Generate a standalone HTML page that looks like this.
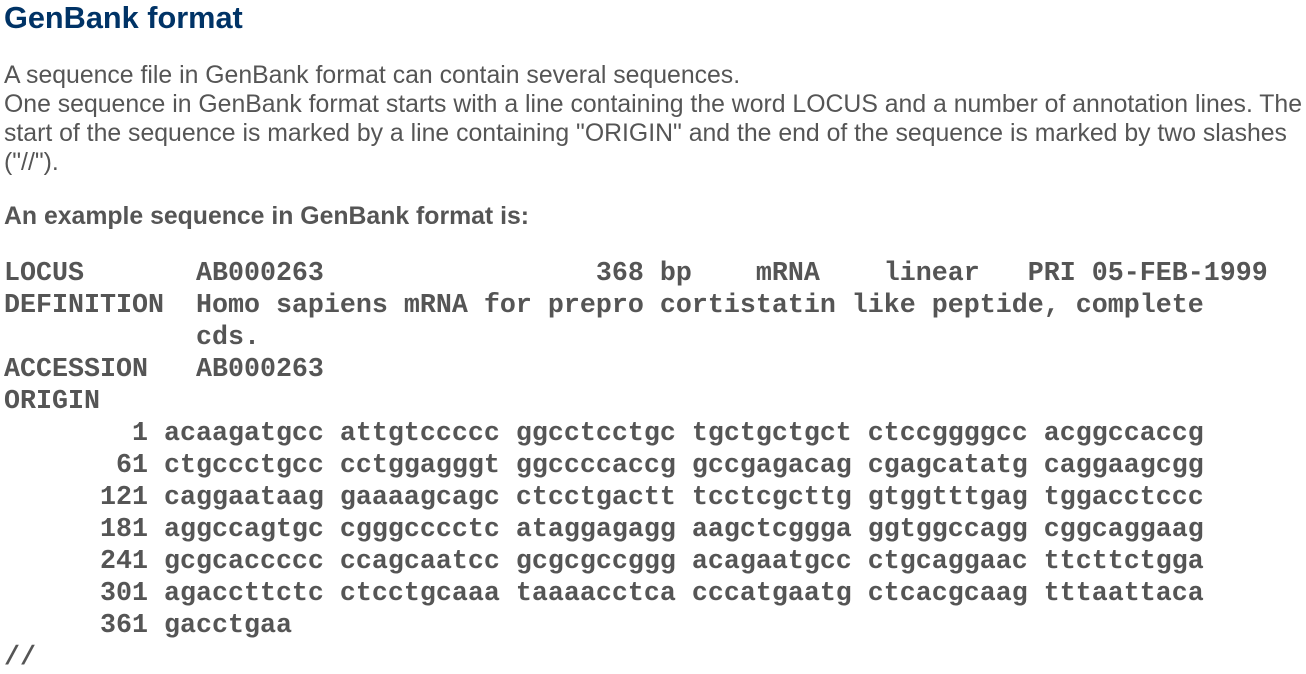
<!DOCTYPE html>
<html><head><style>
body{margin:0;background:#fff;width:1306px;height:673px;overflow:hidden}
h1{font:bold 30.7px "Liberation Sans",sans-serif;color:#003366;margin:0;position:absolute;left:4px;top:0px}
.p{position:absolute;left:4px;width:1302px;font:24.8px/29px "Liberation Sans",sans-serif;color:#555;margin:0;white-space:nowrap}
pre{position:absolute;left:4px;top:258px;margin:0;font:bold 26.67px/32px "Liberation Mono",monospace;color:#555}
</style></head><body>
<h1>GenBank format</h1>
<p class="p" style="top:61px">A sequence file in GenBank format can contain several sequences.<br>One sequence in GenBank format starts with a line containing the word LOCUS and a number of annotation lines. The<br>start of the sequence is marked by a line containing "ORIGIN" and the end of the sequence is marked by two slashes<br>("//").</p>
<p class="p" style="top:202px;font-weight:bold">An example sequence in GenBank format is:</p>
<pre>LOCUS       AB000263                 368 bp    mRNA    linear   PRI 05-FEB-1999
DEFINITION  Homo sapiens mRNA for prepro cortistatin like peptide, complete
            cds.
ACCESSION   AB000263
ORIGIN
        1 acaagatgcc attgtccccc ggcctcctgc tgctgctgct ctccggggcc acggccaccg
       61 ctgccctgcc cctggagggt ggccccaccg gccgagacag cgagcatatg caggaagcgg
      121 caggaataag gaaaagcagc ctcctgactt tcctcgcttg gtggtttgag tggacctccc
      181 aggccagtgc cgggcccctc ataggagagg aagctcggga ggtggccagg cggcaggaag
      241 gcgcaccccc ccagcaatcc gcgcgccggg acagaatgcc ctgcaggaac ttcttctgga
      301 agaccttctc ctcctgcaaa taaaacctca cccatgaatg ctcacgcaag tttaattaca
      361 gacctgaa
//</pre>
</body></html>
